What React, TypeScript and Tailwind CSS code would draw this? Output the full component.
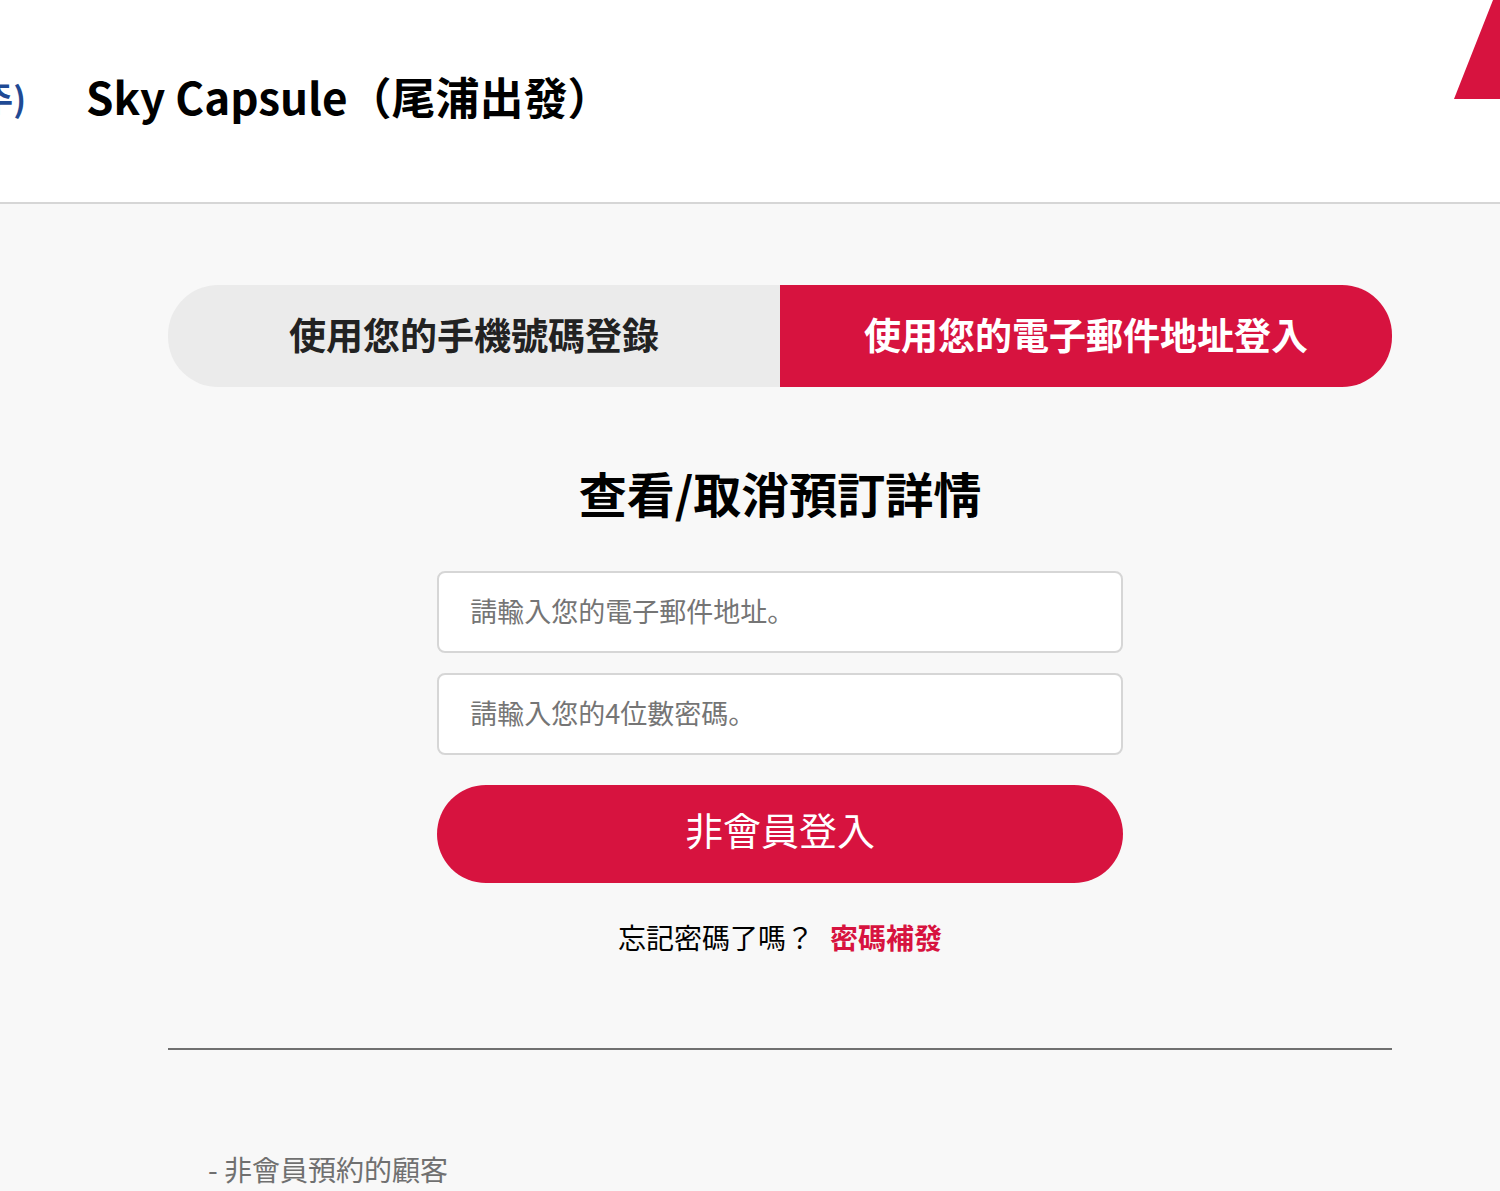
import { useState } from "react";

const tabs = [
  { id: "phone", label: "使用您的手機號碼登錄" },
  { id: "email", label: "使用您的電子郵件地址登入" },
];

export default function App() {
  const [tab, setTab] = useState("email");
  const [data, setData] = useState({ email: "", password: "" });

  return (
    <div className="min-h-screen overflow-hidden bg-[#f8f8f8] font-['Noto_Sans_CJK_KR',sans-serif] text-black">
      <header className="flex h-[204px] items-start justify-between border-b-2 border-[#d6d6d6] bg-white">
        <div className="flex items-center pt-[62px]">
          <a
            href="#home"
            className="flex w-[26px] justify-end overflow-hidden pt-1 text-[34px] leading-[64px] font-bold whitespace-nowrap text-[#1f4a94]"
          >
            주)
          </a>
          <h1 className="ml-[60px] text-[44px] leading-[64px] font-bold whitespace-nowrap">Sky Capsule（尾浦出發）</h1>
        </div>
        <svg className="h-[99px] w-[46px] shrink-0" viewBox="0 0 46 99" aria-hidden="true">
          <path d="M39 0H46V99H0Z" fill="#d7133f" />
        </svg>
      </header>

      <main className="pt-[81px] pr-[108px] pl-[168px]">
        <div role="tablist" className="flex h-[102px] overflow-hidden rounded-[50px]">
          {tabs.map((item) => (
            <button
              key={item.id}
              type="button"
              role="tab"
              aria-selected={tab === item.id}
              onClick={() => setTab(item.id)}
              className={`flex-1 pb-0.5 text-[37px] font-bold whitespace-nowrap ${
                tab === item.id ? "bg-[#d7133f] text-white" : "bg-[#ebebeb] text-[#222222]"
              }`}
            >
              {item.label}
            </button>
          ))}
        </div>

        <h2 className="mt-[73px] text-center text-[48px] leading-[64px] font-bold">查看/取消預訂詳情</h2>

        <form className="mx-auto mt-[47px] w-[56%]" onSubmit={(event) => event.preventDefault()}>
          <div className="space-y-5">
            <input
              type="text"
              aria-label="請輸入您的電子郵件地址。"
              value={data.email}
              onChange={(event) => setData({ ...data, email: event.target.value })}
              placeholder="請輸入您的電子郵件地址。"
              className="block h-[82px] w-full rounded-lg border-2 border-[#d6d6d6] bg-white px-[31px] pb-1 text-[27px] outline-none placeholder:text-[#757575]"
            />
            <input
              type="password"
              aria-label="請輸入您的4位數密碼。"
              maxLength={4}
              value={data.password}
              onChange={(event) => setData({ ...data, password: event.target.value })}
              placeholder="請輸入您的4位數密碼。"
              className="block h-[82px] w-full rounded-lg border-2 border-[#d6d6d6] bg-white px-[31px] pb-1 text-[27px] outline-none placeholder:text-[#757575]"
            />
          </div>
          <button
            type="submit"
            className="mt-[30px] block h-[98px] w-full rounded-[49px] bg-[#d7133f] pb-3 text-[38px] text-white"
          >
            非會員登入
          </button>
        </form>

        <p className="mt-[34px] flex justify-center gap-4 text-[28px] leading-10">
          <span>忘記密碼了嗎？</span>
          <a href="#reissue" className="font-bold text-[#d7133f]">
            密碼補發
          </a>
        </p>

        <hr className="mt-[91px] border-t-2 border-[#707070]" />

        <ul className="mt-[99px] pl-10 text-[28px] leading-10 text-[#707070]">
          <li>- 非會員預約的顧客</li>
        </ul>
      </main>
    </div>
  );
}
